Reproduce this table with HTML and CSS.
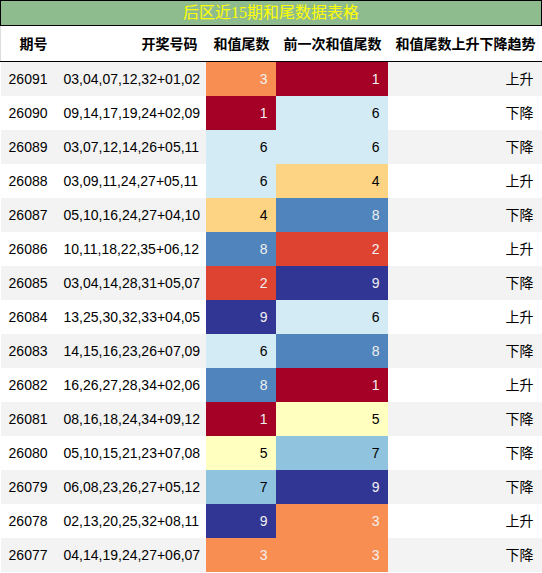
FILE: index.html
```html
<!DOCTYPE html>
<html lang="zh">
<head>
    <meta charset="UTF-8">
    <meta name="viewport" content="width=device-width, initial-scale=1.0">
    <title>后区近15期和尾数据表格</title>
    <link rel="stylesheet" href="styles.css">
</head>
<body>
    <div class="title">后区近15期和尾数据表格</div>
    <table class="data-table">
        <colgroup>
            <col class="c-issue">
            <col class="c-nums">
            <col class="c-sum">
            <col class="c-prev">
            <col class="c-trend">
        </colgroup>
        <thead>
            <tr>
                <th>期号</th>
                <th>开奖号码</th>
                <th>和值尾数</th>
                <th>前一次和值尾数</th>
                <th>和值尾数上升下降趋势</th>
            </tr>
        </thead>
        <tbody>
            <tr><td>26091</td><td>03,04,07,12,32+01,02</td><td class="v3">3</td><td class="v1">1</td><td>上升</td></tr>
            <tr><td>26090</td><td>09,14,17,19,24+02,09</td><td class="v1">1</td><td class="v6">6</td><td>下降</td></tr>
            <tr><td>26089</td><td>03,07,12,14,26+05,11</td><td class="v6">6</td><td class="v6">6</td><td>下降</td></tr>
            <tr><td>26088</td><td>03,09,11,24,27+05,11</td><td class="v6">6</td><td class="v4">4</td><td>上升</td></tr>
            <tr><td>26087</td><td>05,10,16,24,27+04,10</td><td class="v4">4</td><td class="v8">8</td><td>下降</td></tr>
            <tr><td>26086</td><td>10,11,18,22,35+06,12</td><td class="v8">8</td><td class="v2">2</td><td>上升</td></tr>
            <tr><td>26085</td><td>03,04,14,28,31+05,07</td><td class="v2">2</td><td class="v9">9</td><td>下降</td></tr>
            <tr><td>26084</td><td>13,25,30,32,33+04,05</td><td class="v9">9</td><td class="v6">6</td><td>上升</td></tr>
            <tr><td>26083</td><td>14,15,16,23,26+07,09</td><td class="v6">6</td><td class="v8">8</td><td>下降</td></tr>
            <tr><td>26082</td><td>16,26,27,28,34+02,06</td><td class="v8">8</td><td class="v1">1</td><td>上升</td></tr>
            <tr><td>26081</td><td>08,16,18,24,34+09,12</td><td class="v1">1</td><td class="v5">5</td><td>下降</td></tr>
            <tr><td>26080</td><td>05,10,15,21,23+07,08</td><td class="v5">5</td><td class="v7">7</td><td>下降</td></tr>
            <tr><td>26079</td><td>06,08,23,26,27+05,12</td><td class="v7">7</td><td class="v9">9</td><td>下降</td></tr>
            <tr><td>26078</td><td>02,13,20,25,32+08,11</td><td class="v9">9</td><td class="v3">3</td><td>上升</td></tr>
            <tr><td>26077</td><td>04,14,19,24,27+06,07</td><td class="v3">3</td><td class="v3">3</td><td>下降</td></tr>
        </tbody>
    </table>
</body>
</html>
```

FILE: styles.css
```css
body {
    margin: 0;
    font-family: "Liberation Sans", "Noto Sans CJK SC", sans-serif;
    font-size: 14px;
    color: #000;
    background-color: white;
}
.title {
    width: 540px;
    height: 24px;
    line-height: 24px;
    border: 1px solid #000;
    background-color: #8fbc8f;
    color: #ffff00;
    text-align: center;
    font-family: "Liberation Serif", "Noto Sans CJK SC", serif;
    font-size: 16px;
}
.data-table {
    width: 542px;
    border-collapse: collapse;
    table-layout: fixed;
}
.c-issue { width: 55px; }
.c-nums { width: 150px; }
.c-sum { width: 70px; }
.c-prev { width: 112px; }
.c-trend { width: 155px; }
th, td {
    text-align: right;
    padding: 8px 8px;
    line-height: 18px;
    white-space: nowrap;
}
th {
    font-weight: bold;
    padding-top: 9px;
    padding-bottom: 8px;
    border-bottom: 1px solid #000;
}
thead tr {
    border-left: 1px solid #ddd;
    border-right: 1px solid #ddd;
}
tbody tr:nth-child(odd) {
    background-color: #f3f3f3;
}
td:last-child {
    padding-right: 9px;
}
.v1 { background-color: #a50026; color: #f1f1f1; }
.v2 { background-color: #de4331; color: #f1f1f1; }
.v3 { background-color: #f98e52; color: #f1f1f1; }
.v4 { background-color: #fdd384; }
.v5 { background-color: #ffffc0; }
.v6 { background-color: #d3ebf4; }
.v7 { background-color: #8fc3de; }
.v8 { background-color: #4f84bc; color: #f1f1f1; }
.v9 { background-color: #313695; color: #f1f1f1; }
```
